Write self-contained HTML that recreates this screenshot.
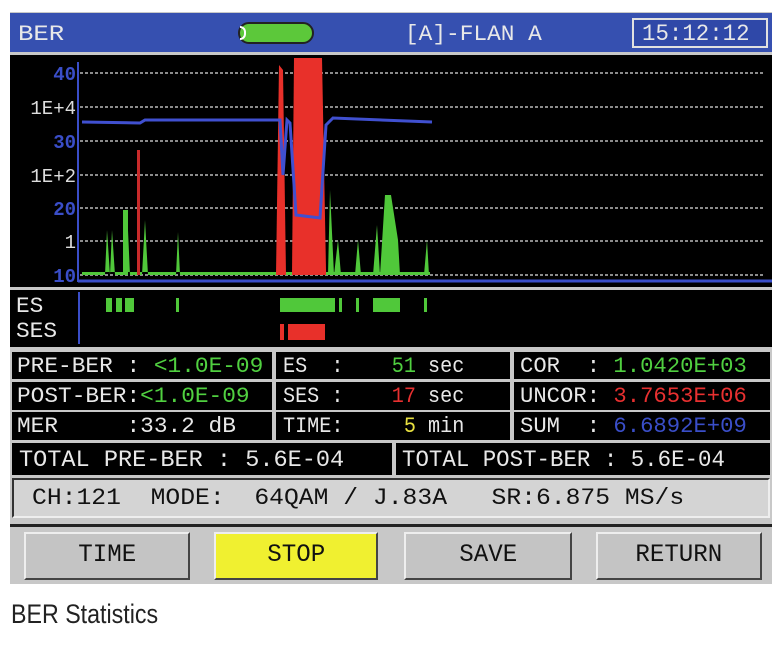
<!DOCTYPE html>
<html><head><meta charset="utf-8"><style>
*{margin:0;padding:0;box-sizing:border-box}
body{width:780px;height:665px;background:#fff;position:relative;overflow:hidden;font-family:"Liberation Mono","DejaVu Sans Mono",monospace}
.a{position:absolute;white-space:nowrap}
.scr{position:absolute;left:10px;top:12px;width:762px;height:572px;background:#c8c8c8}
.t{font-size:19px;line-height:1;color:#e8e8e8;transform:scale(1.2,1.15);transform-origin:left top}
.cell{position:absolute;background:#000}
.btn{position:absolute;top:532px;height:48px;background:#c4c4c4;border:2px solid #444;border-top-color:#eee;border-left-color:#eee;font-size:21px;text-align:center;line-height:44px;color:#111}
.btn span{display:inline-block;transform:scale(1.15,1.2)}
</style></head><body>
<div class="scr"></div>
<!-- title bar -->
<div class="a" style="left:10px;top:13px;width:762px;height:39px;background:#3650b0"></div>
<div class="a t" style="left:18px;top:24px;transform:scale(1.35,1.15)">BER</div>
<div class="a" style="left:238px;top:22px;width:76px;height:22px;border-radius:11px;background:#5cc83a;border:2px solid #222"></div>
<div class="a" style="left:240px;top:26px;width:6px;height:14px;border:2px solid #fff;border-left:none;border-radius:0 6px 6px 0"></div>
<div class="a t" style="left:405px;top:24px;">[A]-FLAN A</div>
<div class="a" style="left:632px;top:18px;width:136px;height:30px;border:2px solid #e0e0e0;background:#2f48a8"></div>
<div class="a t" style="left:642px;top:24px;font-size:20px;transform:scale(1.12,1.15)">15:12:12</div>
<!-- chart -->
<svg class="a" style="left:10px;top:55px" width="762" height="232" viewBox="10 55 762 232">
<rect x="10" y="55" width="762" height="232" fill="#000"/>
<g stroke="#bbb" stroke-width="1.5" stroke-dasharray="3 2">
<line x1="80" x2="765" y1="73" y2="73"/><line x1="80" x2="765" y1="107" y2="107"/><line x1="80" x2="765" y1="141" y2="141"/><line x1="80" x2="765" y1="175" y2="175"/><line x1="80" x2="765" y1="208" y2="208"/><line x1="80" x2="765" y1="241" y2="241"/><line x1="80" x2="765" y1="275" y2="275"/>
</g>
<g fill="#50c83a">
<polygon points="82,275 105,275 107,230 110,275 112,230 115,275 124,275 127,208 130,275 142,275 145,220 148,275 176,275 178,232 180,275 430,275 430,272 82,272"/>
<rect x="123" y="210" width="5" height="65"/>
<polygon points="328,275 330,190 334,275 338,240 341,275 355,275 358,240 361,275 373,275 377,225 380,275 385,195 391,195 398,240 400,275 424,275 427,240 429,275"/>
</g>
<polygon fill="#e8302a" points="276,275 279,65 283,70 286,275"/>
<polygon fill="#e8302a" points="292,275 294,58 322,58 326,270 326,275"/>
<rect x="137" y="150" width="3" height="125" fill="#c82a2a"/>
<polyline fill="none" stroke="#4050d0" stroke-width="3" points="82,122 140,123 145,120 280,120 283,175 287,120 290,123 296,215 320,218 326,125 333,118 432,122"/>
<line x1="78" y1="62" x2="78" y2="282" stroke="#3a4ec8" stroke-width="2"/>
<line x1="78" y1="281" x2="772" y2="281" stroke="#3a4ec8" stroke-width="3"/>
<g font-family="Liberation Mono,monospace" font-size="19" text-anchor="end" font-weight="bold">
<text x="76" y="80" fill="#3a4ec8">40</text><text x="76" y="114" fill="#ddd" font-weight="normal">1E+4</text><text x="76" y="148" fill="#3a4ec8">30</text><text x="76" y="182" fill="#ddd" font-weight="normal">1E+2</text><text x="76" y="215" fill="#3a4ec8">20</text><text x="76" y="248" fill="#ddd" font-weight="normal">1</text><text x="76" y="282" fill="#3a4ec8">10</text>
</g>
</svg>
<!-- ES/SES -->
<div class="a" style="left:10px;top:290px;width:762px;height:57px;background:#000"></div>
<div class="a t" style="left:16px;top:296px;">ES</div>
<div class="a t" style="left:16px;top:321px;">SES</div>
<div class="a" style="left:78px;top:292px;width:2px;height:52px;background:#3a4ec8"></div>
<svg class="a" style="left:0;top:290px" width="780" height="57">
<g fill="#50c83a"><rect x="106" y="8" width="6" height="14"/><rect x="116" y="8" width="6" height="14"/><rect x="125" y="8" width="9" height="14"/><rect x="176" y="8" width="3" height="14"/><rect x="280" y="8" width="55" height="14"/><rect x="339" y="8" width="3" height="14"/><rect x="356" y="8" width="3" height="14"/><rect x="373" y="8" width="27" height="14"/><rect x="424" y="8" width="3" height="14"/></g>
<g fill="#e8302a"><rect x="280" y="34" width="4" height="16"/><rect x="288" y="34" width="37" height="16"/></g>
</svg>
<!-- table -->
<div class="cell" style="left:12px;top:352px;width:260px;height:27px"></div>
<div class="cell" style="left:276px;top:352px;width:234px;height:27px"></div>
<div class="cell" style="left:514px;top:352px;width:256px;height:27px"></div>
<div class="cell" style="left:12px;top:382px;width:260px;height:28px"></div>
<div class="cell" style="left:276px;top:382px;width:234px;height:28px"></div>
<div class="cell" style="left:514px;top:382px;width:256px;height:28px"></div>
<div class="cell" style="left:12px;top:412px;width:260px;height:28px"></div>
<div class="cell" style="left:276px;top:412px;width:234px;height:28px"></div>
<div class="cell" style="left:514px;top:412px;width:256px;height:28px"></div>
<div class="cell" style="left:12px;top:443px;width:380px;height:32px"></div>
<div class="cell" style="left:396px;top:443px;width:374px;height:32px"></div>
<div class="a t" style="left:17px;top:356px;">PRE-BER : <span style="color:#50d040">&lt;1.0E-09</span></div>
<div class="a t" style="left:17px;top:386px;">POST-BER:<span style="color:#50d040">&lt;1.0E-09</span></div>
<div class="a t" style="left:17px;top:416px;">MER&nbsp;&nbsp;&nbsp;&nbsp;&nbsp;:33.2 dB</div>
<div class="a t" style="left:283px;top:356px;transform:scale(1.06,1.15)">ES&nbsp;&nbsp;:&nbsp;&nbsp;&nbsp;&nbsp;<span style="color:#50d040">51</span> sec</div>
<div class="a t" style="left:283px;top:386px;transform:scale(1.06,1.15)">SES :&nbsp;&nbsp;&nbsp;&nbsp;<span style="color:#e83030">17</span> sec</div>
<div class="a t" style="left:283px;top:416px;transform:scale(1.06,1.15)">TIME:&nbsp;&nbsp;&nbsp;&nbsp;&nbsp;<span style="color:#e8e040">5</span> min</div>
<div class="a t" style="left:520px;top:356px;transform:scale(1.17,1.15)">COR&nbsp;&nbsp;: <span style="color:#50d040">1.0420E+03</span></div>
<div class="a t" style="left:520px;top:386px;transform:scale(1.17,1.15)">UNCOR: <span style="color:#e83030">3.7653E+06</span></div>
<div class="a t" style="left:520px;top:416px;transform:scale(1.17,1.15)">SUM&nbsp;&nbsp;: <span style="color:#3a4ec8">6.6892E+09</span></div>
<div class="a t" style="left:19px;top:449px;transform:scale(1.24,1.2)">TOTAL PRE-BER : 5.6E-04</div>
<div class="a t" style="left:402px;top:449px;transform:scale(1.18,1.2)">TOTAL POST-BER : 5.6E-04</div>
<!-- info bar -->
<div class="a" style="left:12px;top:478px;width:758px;height:40px;background:#d4d4d4;border:2px solid #333;border-bottom-color:#eee;border-right-color:#eee"></div>
<div class="a t" style="left:32px;top:487px;color:#111;transform:scale(1.3,1.2)">CH:121&nbsp;&nbsp;MODE:&nbsp;&nbsp;64QAM / J.83A&nbsp;&nbsp;&nbsp;SR:6.875 MS/s</div>
<div class="a" style="left:10px;top:524px;width:762px;height:3px;background:#222"></div>
<!-- buttons -->
<div class="btn" style="left:24px;width:166px"><span>TIME</span></div>
<div class="btn" style="left:214px;width:164px;background:#f0f030"><span>STOP</span></div>
<div class="btn" style="left:404px;width:168px"><span>SAVE</span></div>
<div class="btn" style="left:596px;width:166px"><span>RETURN</span></div>
<div class="a" style="left:11px;top:599px;font-family:'Liberation Sans',sans-serif;font-size:27px;color:#222;transform:scaleX(0.86);transform-origin:left top">BER Statistics</div>
</body></html>
